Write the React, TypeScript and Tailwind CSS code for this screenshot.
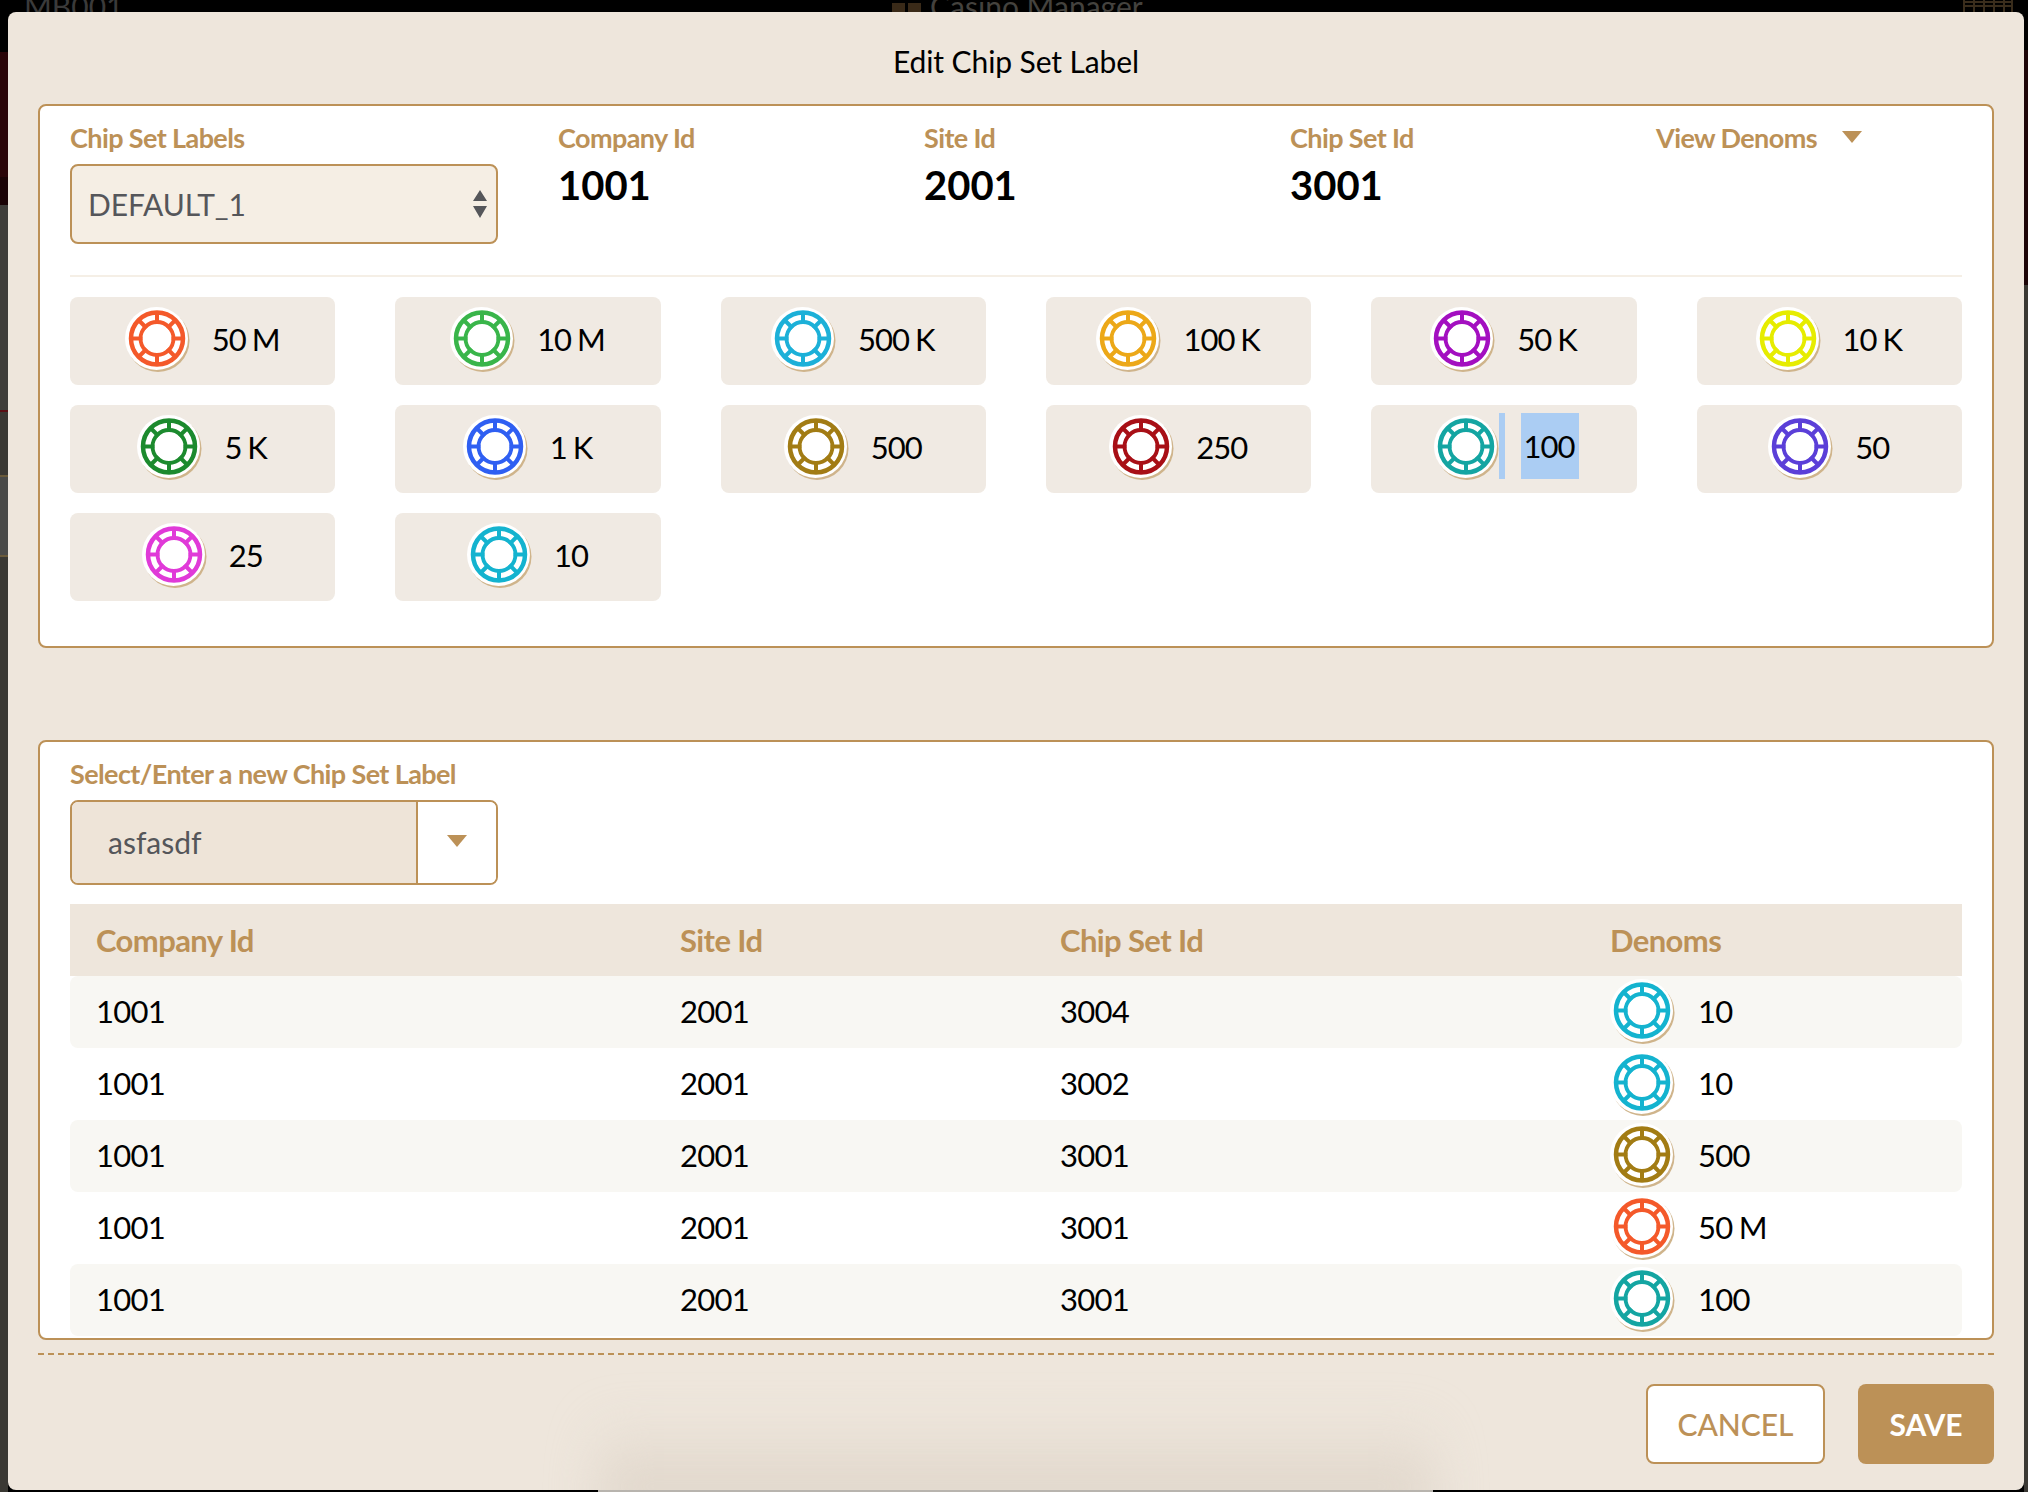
const denoms = [
  { label: "50 M", color: "#f4592a" },
  { label: "10 M", color: "#39b54a" },
  { label: "500 K", color: "#1cb0d8" },
  { label: "100 K", color: "#eca818" },
  { label: "50 K", color: "#a30fc0" },
  { label: "10 K", color: "#e6ec00" },
  { label: "5 K", color: "#1c8a2e" },
  { label: "1 K", color: "#2f5ff2" },
  { label: "500", color: "#a27c14" },
  { label: "250", color: "#a80f16" },
  { label: "100", color: "#14a5a2", selected: true },
  { label: "50", color: "#5b3fd8" },
  { label: "25", color: "#e03ad8" },
  { label: "10", color: "#14b3cf" },
];

const rows = [
  ["1001", "2001", "3004", "10", "#14b3cf"],
  ["1001", "2001", "3002", "10", "#14b3cf"],
  ["1001", "2001", "3001", "500", "#a27c14"],
  ["1001", "2001", "3001", "50 M", "#f4592a"],
  ["1001", "2001", "3001", "100", "#14a5a2"],
];

function Chip({ color, className }: { color: string; className?: string }) {
  const spokes = [0, 45, 90, 135, 180, 225, 270, 315];
  return (
    <svg width="66" height="66" viewBox="0 0 66 66" className={`shrink-0 ${className ?? ""}`}>
      <circle cx="34" cy="34.5" r="31.5" fill="#cfb48b" />
      <circle cx="32.5" cy="32.5" r="31.5" fill="#ffffff" />
      {spokes.map((a) => (
        <line key={a} x1="33" y1="18" x2="33" y2="6" stroke={color} strokeWidth="4" transform={`rotate(${a} 33 32.5)`} />
      ))}
      <circle cx="33" cy="32.5" r="26" fill="none" stroke={color} strokeWidth="4.5" />
      <circle cx="33" cy="32.5" r="16.5" fill="none" stroke={color} strokeWidth="3.8" />
    </svg>
  );
}

function Tile({ label, color, selected }: { label: string; color: string; selected?: boolean }) {
  return (
    <div className={`flex h-[88px] items-center justify-center rounded-lg bg-[#f0eae3] text-[31px] tracking-[-1px] text-black [word-spacing:-1px] ${selected ? "pl-[5px]" : ""}`}>
      <Chip color={color} className="mb-1" />
      {selected ? (
        <>
          <span className="mb-[6px] h-[66px] w-[6px] bg-[#abcdf3]" />
          <span className="mb-[6px] ml-4 flex h-[66px] w-[58px] items-center justify-center bg-[#abcdf3] pr-[3px]">{label}</span>
        </>
      ) : (
        <span className="mb-[4px] ml-[22px] pr-[2px]">{label}</span>
      )}
    </div>
  );
}

function Info({ label, value }: { label: string; value: string }) {
  return (
    <div className="flex flex-col">
      <span className="text-[27px] leading-8 font-bold tracking-[-0.6px] text-[#bc9157]">{label}</span>
      <span className="mt-[5px] text-[40px] leading-[52px] font-bold text-black">{value}</span>
    </div>
  );
}

export default function App() {
  return (
    <div className="relative h-[1492px] w-[2028px] overflow-hidden bg-black font-['Lato','Liberation_Sans',sans-serif]">
      {/* page behind the modal */}
      <div className="absolute top-0 left-0 flex h-full w-2 flex-col">
        <div className="h-[52px] bg-black" />
        <div className="h-[125px] bg-[#2a0508]" />
        <div className="h-[28px] bg-[#1a0305]" />
        <div className="h-[205px] bg-[#3f3e3a]" />
        <div className="h-[2px] bg-[#5a0f14]" />
        <div className="h-[63px] bg-[#3a3833]" />
        <div className="h-[2px] bg-[#6a5a3a]" />
        <div className="h-[78px] bg-[#4a4a48]" />
        <div className="h-[2px] bg-[#6a5a3a]" />
        <div className="flex-1 bg-[#3a3833]" />
      </div>
      <div className="absolute top-0 right-0 flex h-full w-[4px] flex-col">
        <div className="h-[50px] bg-black" />
        <div className="h-[235px] bg-[#1d0508]" />
        <div className="flex-1 bg-[#3a3833]" />
      </div>
      <span className="absolute top-[-12px] left-[24px] text-[30px] leading-9 text-[#3a3a3a]">MB001</span>
      <div className="absolute top-[3px] left-[892px] flex gap-[3px]">
        <span className="h-[9px] w-[13px] bg-[#3a2a18]" />
        <span className="h-[9px] w-[13px] bg-[#3a2a18]" />
      </div>
      <span className="absolute top-[-12px] left-[930px] text-[30px] leading-9 text-[#44423e]">Casino Manager</span>
      <svg width="50" height="12" viewBox="0 0 50 12" className="absolute top-0 left-[1963px]">
        <path d="M1 0V12M49 0V12M1 2H49M1 6H49M11 0V12M21 0V12M31 0V12M41 0V12" stroke="#3a2d1c" strokeWidth="2" fill="none" />
      </svg>

      <div className="absolute top-3 left-2 flex h-[1478px] w-[2016px] flex-col overflow-hidden rounded-lg bg-[#eee6dc] pr-[30px] pl-[30px]">
        <h1 className="mt-[29px] h-[63px] text-center text-[30px] leading-10 tracking-[-0.1px] text-black">Edit Chip Set Label</h1>

        <section className="h-[544px] rounded-lg border-2 border-[#bc9157] bg-white px-[30px] pt-[16px]">
          <div className="flex h-[155px] border-b-2 border-[#f5efe6]">
            <div className="flex w-[488px] flex-col">
              <span className="text-[27px] leading-8 font-bold tracking-[-0.6px] text-[#bc9157]">Chip Set Labels</span>
              <div className="mt-[10px] flex h-[80px] w-[428px] items-center justify-between rounded-lg border-2 border-[#bc9157] bg-[#f5eee4] pr-[8px] pl-[16px]">
                <span className="text-[30px] tracking-[-0.1px] text-[#55565a]">DEFAULT_1</span>
                <svg width="16" height="30" viewBox="0 0 16 30">
                  <path d="M8 1 15 12H1Z M1 17H15L8 29Z" fill="#55565a" />
                </svg>
              </div>
            </div>
            <div className="w-[366px]"><Info label="Company Id" value="1001" /></div>
            <div className="w-[366px]"><Info label="Site Id" value="2001" /></div>
            <div className="w-[366px]"><Info label="Chip Set Id" value="3001" /></div>
            <div className="flex h-8 items-center">
              <span className="text-[27px] font-bold tracking-[-0.6px] text-[#bc9157]">View Denoms</span>
              <svg width="20" height="12" viewBox="0 0 20 12" className="mb-[2px] ml-[25px]">
                <path d="M0 0H20L10 12Z" fill="#bc9157" />
              </svg>
            </div>
          </div>
          <div className="mt-[20px] grid grid-cols-6 gap-x-[60px] gap-y-[20px]">
            {denoms.map((d) => (
              <Tile key={d.label} label={d.label} color={d.color} selected={d.selected} />
            ))}
          </div>
        </section>

        <section className="mt-[92px] h-[600px] overflow-hidden rounded-lg border-2 border-[#bc9157] bg-white px-[30px] pt-[16px]">
          <span className="block text-[27px] leading-8 font-bold tracking-[-0.6px] text-[#bc9157]">Select/Enter a new Chip Set Label</span>
          <div className="mt-[10px] flex h-[85px] w-[428px] overflow-hidden rounded-lg border-2 border-[#bc9157]">
            <div className="flex flex-1 items-center bg-[#eee4d8] pl-[36px] text-[30px] text-[#55565a]">asfasdf</div>
            <div className="flex w-[80px] items-center justify-center border-l-2 border-[#bc9157] bg-white">
              <svg width="20" height="12" viewBox="0 0 20 12" className="mb-1">
                <path d="M0 0H20L10 12Z" fill="#bc9157" />
              </svg>
            </div>
          </div>

          <div className="mt-[19px]">
            <div className="grid h-[72px] grid-cols-[584px_380px_550px_1fr] items-center bg-[#eee6dc] pl-[26px] text-[31px] font-bold tracking-[-0.6px] text-[#bc9157]">
              <span>Company Id</span>
              <span>Site Id</span>
              <span>Chip Set Id</span>
              <span>Denoms</span>
            </div>
            {rows.map((r, i) => (
              <div key={i} className={`grid h-[72px] grid-cols-[584px_380px_550px_1fr] items-center rounded-lg pl-[26px] text-[31px] tracking-[-0.7px] text-black [word-spacing:-1px] ${i % 2 === 0 ? "bg-[#f8f7f3]" : "bg-white"}`}>
                <span className="mb-[2px]">{r[0]}</span>
                <span className="mb-[2px]">{r[1]}</span>
                <span className="mb-[2px]">{r[2]}</span>
                <span className="flex items-center">
                  <Chip color={r[4]} className="mb-[2px] -ml-[1px]" />
                  <span className="mb-[2px] ml-[23px]">{r[3]}</span>
                </span>
              </div>
            ))}
          </div>
        </section>

        <div className="mt-[13px] border-t-2 border-dashed border-[#bc9157]" />

        <div className="mt-[29px] flex justify-end gap-[33px]">
          <button className="h-[80px] w-[179px] rounded-lg border-2 border-[#bc9157] bg-white text-[30px] font-medium text-[#bc9157]">CANCEL</button>
          <button className="h-[80px] w-[136px] rounded-lg bg-[#bc9157] text-[30px] font-bold text-white">SAVE</button>
        </div>

        {/* dock shadow along the lower edge */}
        <div className="absolute right-[590px] bottom-[-24px] left-[590px] h-[100px] bg-gradient-to-t from-[#dcd2c6] to-transparent blur-[24px]" />
      </div>
      <div className="absolute bottom-0 left-[598px] h-[2px] w-[835px] bg-[#b8b4ae]" />
    </div>
  );
}
